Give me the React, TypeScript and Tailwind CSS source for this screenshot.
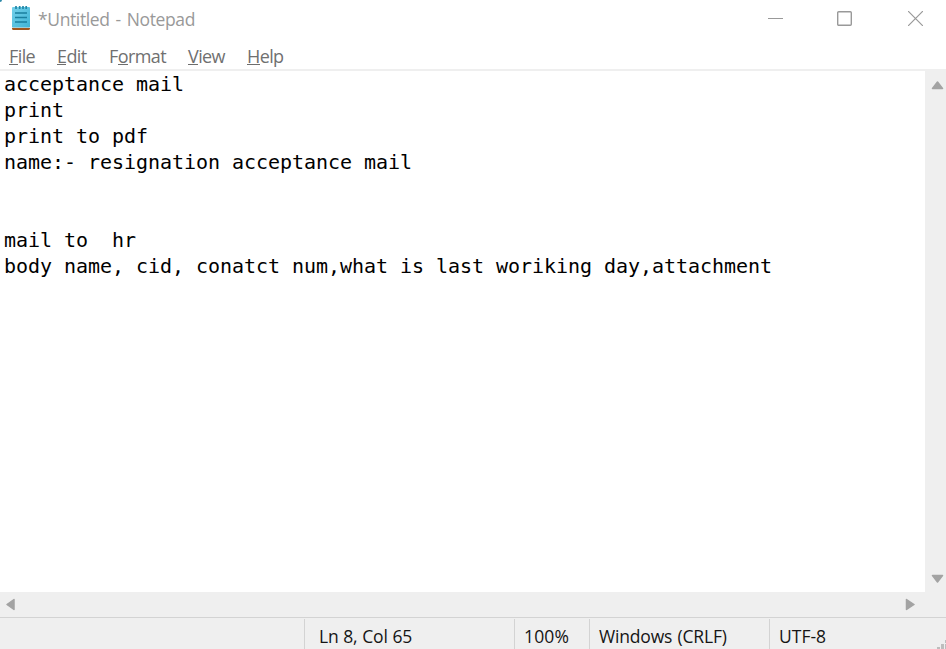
import React from "react";

const UI_FONT = "font-['Open_Sans','Noto_Sans',sans-serif]";

function NotepadIcon() {
  return (
    <svg width="20" height="26" viewBox="0 0 20 26" className="block">
      <defs>
        <linearGradient id="page" x1="0" y1="0" x2="1" y2="1">
          <stop offset="0" stopColor="#74d0ea" />
          <stop offset="1" stopColor="#3fb4d6" />
        </linearGradient>
      </defs>
      <path d="M1 21h18v2.500a1.500 1.500 0 0 1-1.500 1.500h-15A1.500 1.500 0 0 1 1 23.500z" fill="#a0561f" />
      <rect x="1" y="22" width="18" height="1" fill="#e8e0da" />
      <rect x="1" y="2" width="18" height="20.500" rx="1" fill="url(#page)" />
      <path d="M5 1v3M8.700 1v3M12 1v3M15.200 1v3" stroke="#2387a6" strokeWidth="1.700" />
      <path d="M4 8h12M4 12.500h12M4 17h12" stroke="#1a7f9f" strokeWidth="1.500" />
    </svg>
  );
}

const menus = [
  { key: "F", rest: "ile", cls: "w-12 tracking-[-0.6px]" },
  { key: "E", rest: "dit", cls: "w-[52px] tracking-[-0.6px]" },
  { pre: "F", key: "o", rest: "rmat", cls: "w-[79px] tracking-[-0.6px]" },
  { key: "V", rest: "iew", cls: "w-[59px] tracking-[-0.6px]" },
  { key: "H", rest: "elp", cls: "tracking-[-0.6px]" },
];

const lines = [
  "acceptance mail",
  "print",
  "print to pdf",
  "name:- resignation acceptance mail",
  "",
  "",
  "mail to  hr",
  "body name, cid, conatct num,what is last woriking day,attachment",
];

function Arrow({ d, w, h }: { d: string; w: number; h: number }) {
  return (
    <svg width={w} height={h} viewBox={`0 0 ${w} ${h}`} className="block">
      <path d={d} fill="#a3a3a3" stroke="#a3a3a3" strokeWidth="1.500" strokeLinejoin="round" />
    </svg>
  );
}

export default function App() {
  return (
    <div className={`relative flex h-[649px] w-[946px] flex-col overflow-hidden bg-white ${UI_FONT}`}>
      <div className="absolute left-0 top-0 size-[2px] rounded-br-full bg-[#2f8aa8]" />
      <header className="flex h-[38px] shrink-0 items-start">
        <div className="ml-[11px] mt-[5px]"><NotepadIcon /></div>
        <h1 className="ml-[7px] mt-[7px] whitespace-pre text-[17.500px] leading-6 tracking-[-0.38px] text-[#999] [word-spacing:1.800px]">*Untitled - Notepad</h1>
        <div className="ml-auto flex h-[37px] items-center text-[#999]">
          <svg width="15" height="15" className="mr-[54px]"><path d="M0 7.500h15" stroke="currentColor" /></svg>
          <svg width="15" height="15" className="mr-[56px]"><rect x=".7" y=".7" width="13.600" height="13.600" rx="1" fill="none" stroke="currentColor" strokeWidth="1.400" /></svg>
          <svg width="15" height="15" className="mr-[23px]"><path d="M0 0l15 15M15 0L0 15" stroke="currentColor" strokeWidth="1.200" /></svg>
        </div>
      </header>
      <nav className="flex h-[31px] shrink-0 pl-[9px] pt-[6px] text-[18px] leading-6 text-[#707070]">
        {menus.map((m) => (
          <span key={m.key} className={`whitespace-nowrap ${m.cls}`}>
            {m.pre}
            <span className="inline-block h-[21px] border-b border-[#6d6d6d] align-top">{m.key}</span>
            {m.rest}
          </span>
        ))}
      </nav>
      <div className="h-[2px] shrink-0 bg-[#efefef]" />
      <div className="flex h-[521px] shrink-0">
        <main className="w-[925px] pl-1 font-['DejaVu_Sans_Mono',monospace] text-[20px] leading-[26px] tracking-[-0.041px] text-black">
          {lines.map((line, i) => (
            <div key={i} className="h-[26px] whitespace-pre">{line}</div>
          ))}
        </main>
        <aside className="flex w-[21px] flex-col items-start justify-between bg-[#efefef] pb-[9px] pl-[6px] pt-[10px]">
          <Arrow w={13} h={9} d="M6.500 1L11.500 7.500H1.500Z" />
          <Arrow w={13} h={9} d="M6.500 8L1.500 1.500H11.500Z" />
        </aside>
      </div>
      <div className="flex h-[25px] shrink-0 items-center bg-[#efefef] pl-[5px] pr-[31px]">
        <Arrow w={10} h={13} d="M2 6.500L9 1.500V11.500Z" />
        <div className="ml-auto"><Arrow w={10} h={13} d="M9 6.500L1.500 1.500V11.500Z" /></div>
      </div>
      <footer className="relative flex h-[32px] shrink-0 border-t border-[#d3d3d3] bg-[#efefef] pt-px text-[17.500px] leading-[34px] text-[#151515]">
        <div className="w-[304px]" />
        <div className="w-[210px] border-l border-[#d3d3d3] pl-[14px] tracking-[-0.2px] [word-spacing:0.500px]">Ln 8, Col 65</div>
        <div className="w-[75px] border-l border-[#d3d3d3] pl-[9px] tracking-[0.15px]">100%</div>
        <div className="w-[180px] border-l border-[#d3d3d3] pl-[9px] tracking-[-0.18px] [word-spacing:1px]">Windows (CRLF)</div>
        <div className="border-l border-[#d3d3d3] pl-[9px]">UTF-8</div>
        <svg width="9" height="9" className="absolute bottom-0 right-0">
          <path d="M0 7h3v2H0zM4 4h3v5H4zM8 0h1v3H8zM8 4h1v5H8z" fill="#bdbdbd" />
        </svg>
      </footer>
    </div>
  );
}
